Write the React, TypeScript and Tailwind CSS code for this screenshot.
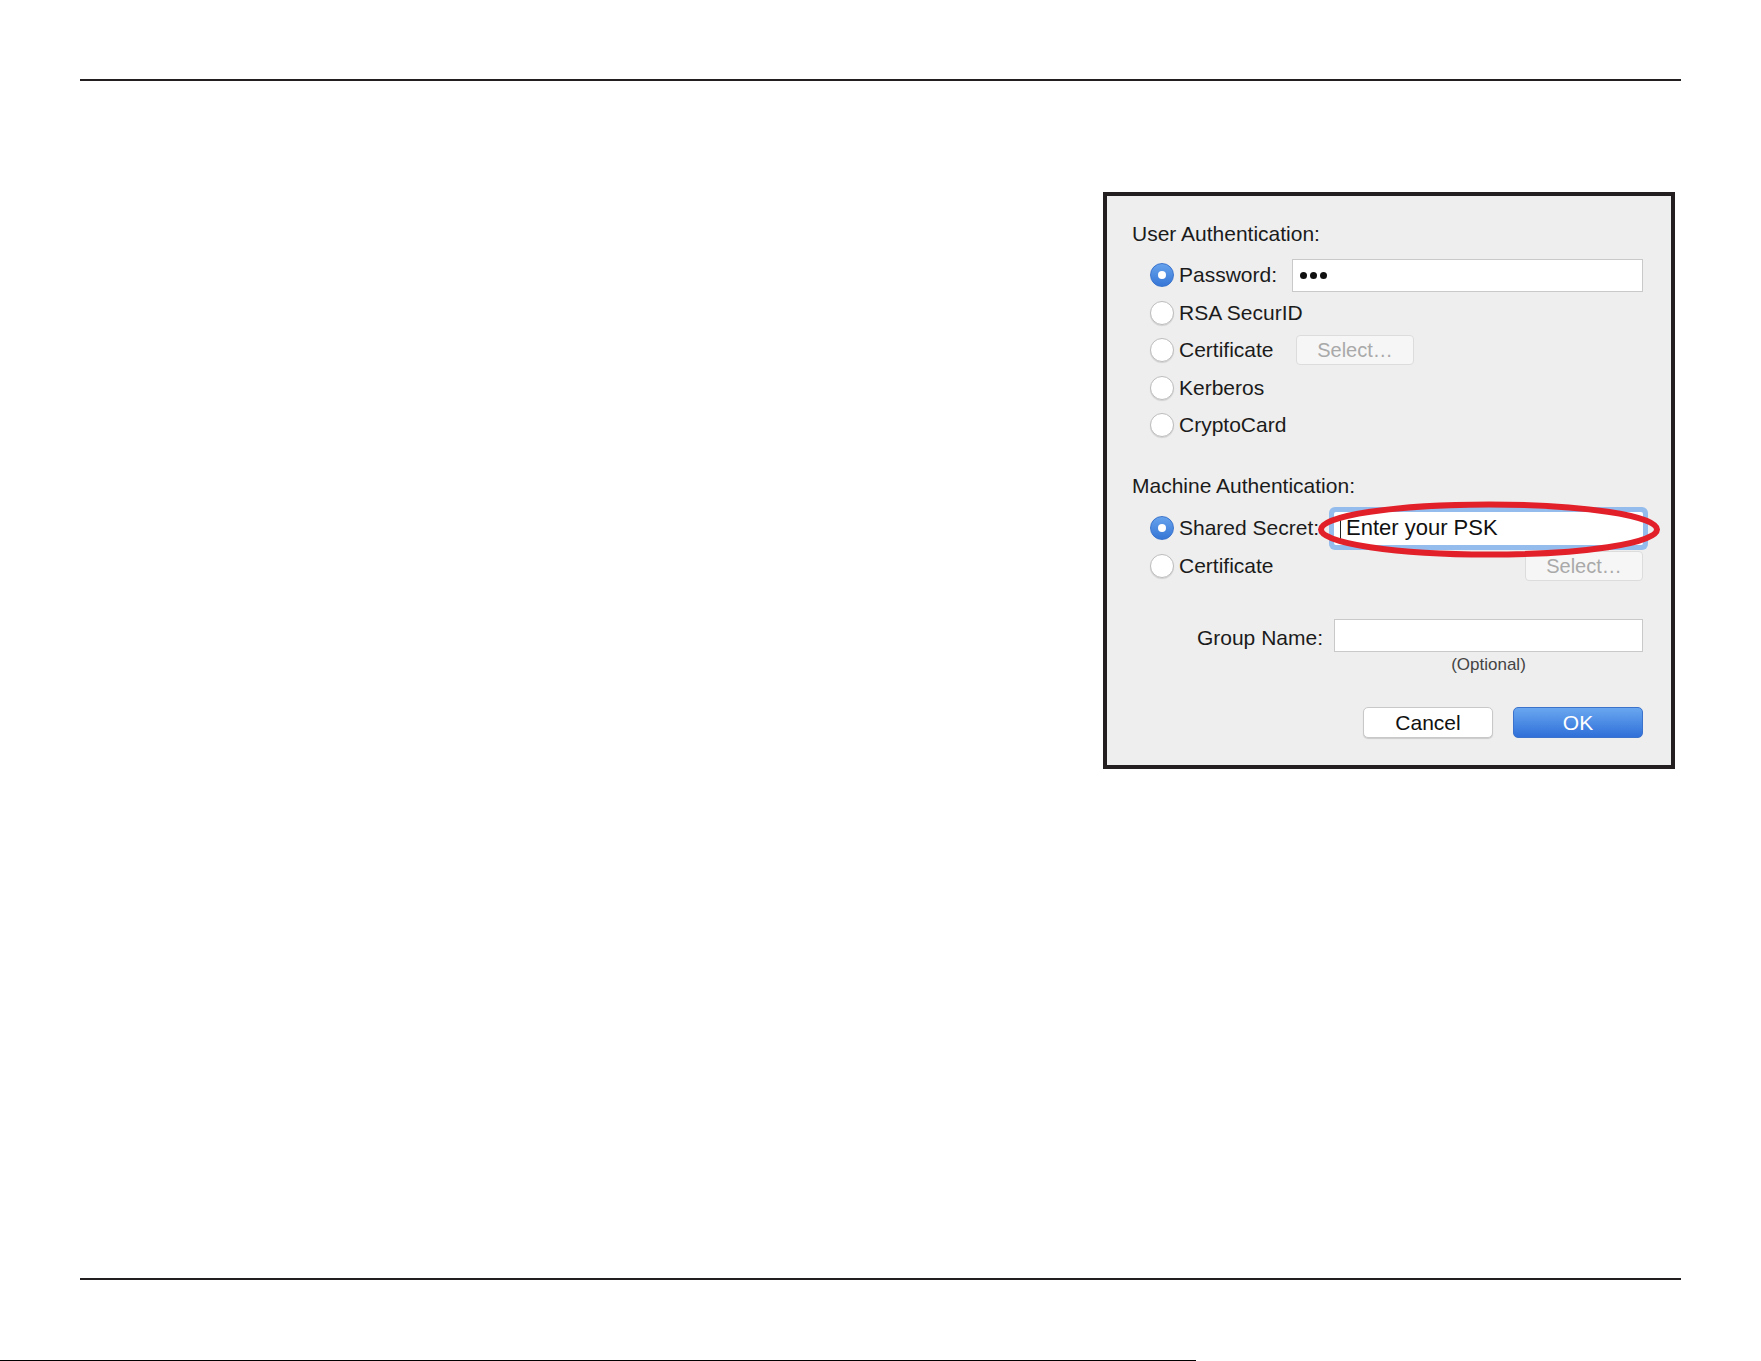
import React from 'react';

const font = { fontFamily: '"Liberation Sans", Arial, Helvetica, sans-serif' };

function Radio({ checked }: { checked?: boolean }) {
  if (checked) {
    return (
      <span className="w-[24px] h-[24px] rounded-full bg-gradient-to-b from-[#66a2ec] to-[#3676d6] border border-[#3b74cc] flex items-center justify-center shrink-0">
        <span className="w-[8px] h-[8px] rounded-full bg-white" />
      </span>
    );
  }
  return (
    <span className="w-[24px] h-[24px] rounded-full bg-white border border-[#bdbdbd] shadow-[0_1px_1px_rgba(0,0,0,0.12)] shrink-0" />
  );
}

function SelectButton() {
  return (
    <button className="w-[118px] h-[30px] rounded-[4px] bg-[#f6f6f6] border border-[#dcdcdc] text-[20px] leading-none text-[#a9a9a9] flex items-center justify-center">
      Select…
    </button>
  );
}

function RadioRow({ label, checked, children, labelWidth }: { label: string; checked?: boolean; children?: React.ReactNode; labelWidth?: string }) {
  return (
    <div className="h-[37.5px] flex items-center pl-[18px]">
      <Radio checked={checked} />
      <span className={`ml-[5px] text-[21px] leading-[24px] text-[#1b1b1b] whitespace-nowrap ${labelWidth ?? ''}`}>{label}</span>
      {children}
    </div>
  );
}

export default function App() {
  return (
    <div className="w-[1761px] h-[1361px] bg-white flex flex-col" style={font}>
      <div className="px-[80px] pt-[79px] flex flex-col">
        <div className="h-[2px] bg-[#231f20]" />

        <div className="flex justify-end pr-[6px] mt-[111px]">
          <div className="w-[572px] border-[4px] border-[#231f20] bg-[#eeeeee] pl-[25px] pr-[28px] pt-[26px] pb-[27px] flex flex-col">
            <div className="text-[21px] leading-[24px] text-[#1b1b1b]">User Authentication:</div>

            <div className="mt-[10.5px] flex flex-col">
              <RadioRow label="Password:" checked>
                <div className="ml-auto w-[351px] h-[33px] bg-white border border-[#c9c9c9] flex items-center gap-[3px] pl-[7px]">
                  <span className="w-[7px] h-[7px] rounded-full bg-[#111]" />
                  <span className="w-[7px] h-[7px] rounded-full bg-[#111]" />
                  <span className="w-[7px] h-[7px] rounded-full bg-[#111]" />
                </div>
              </RadioRow>
              <RadioRow label="RSA SecurID" />
              <RadioRow label="Certificate" labelWidth="w-[117px]">
                <SelectButton />
              </RadioRow>
              <RadioRow label="Kerberos" />
              <RadioRow label="CryptoCard" />
            </div>

            <div className="mt-[30px] text-[21px] leading-[24px] text-[#1b1b1b]">Machine Authentication:</div>

            <div className="mt-[11.5px] flex flex-col">
              <RadioRow label="Shared Secret:" checked>
                <div className="relative ml-auto w-[309px] h-[33px] bg-white rounded-[2px] ring-[5px] ring-[#94bcec] flex items-center pl-[6px]">
                  <span className="w-px h-[21px] bg-[#222]" />
                  <span className="ml-[5px] text-[22px] leading-[24px] text-[#111]">Enter your PSK</span>
                  <svg className="absolute left-[-17px] top-[-11px]" width="344" height="57" viewBox="0 0 344 57">
                    <ellipse cx="172" cy="28.5" rx="168" ry="25" fill="none" stroke="#e2202a" strokeWidth="6" />
                  </svg>
                </div>
              </RadioRow>
              <RadioRow label="Certificate">
                <div className="ml-auto">
                  <SelectButton />
                </div>
              </RadioRow>
            </div>

            <div className="mt-[34.5px] flex items-center justify-end gap-[11px]">
              <span className="text-[21px] leading-[24px] text-[#1b1b1b] mt-[5px]">Group Name:</span>
              <div className="w-[309px] h-[33px] bg-white border border-[#c9c9c9]" />
            </div>
            <div className="mt-[3px] flex justify-end">
              <div className="w-[309px] text-center text-[17px] leading-[20px] text-[#444]">(Optional)</div>
            </div>

            <div className="mt-[32px] flex justify-end gap-[20px]">
              <button className="w-[130px] h-[31px] rounded-[5px] bg-white border border-[#c8c8c8] shadow-[0_1px_1px_rgba(0,0,0,0.15)] text-[21px] leading-none text-[#111]">
                Cancel
              </button>
              <button className="w-[130px] h-[31px] rounded-[5px] bg-gradient-to-b from-[#6aa7f0] to-[#2f6fd8] border border-[#3a72cc] text-[21px] leading-none text-white">
                OK
              </button>
            </div>
          </div>
        </div>

        <div className="h-[2px] bg-[#231f20] mt-[509px]" />
      </div>
      <div className="mt-[80px] h-px w-[1196px] bg-black" />
    </div>
  );
}
